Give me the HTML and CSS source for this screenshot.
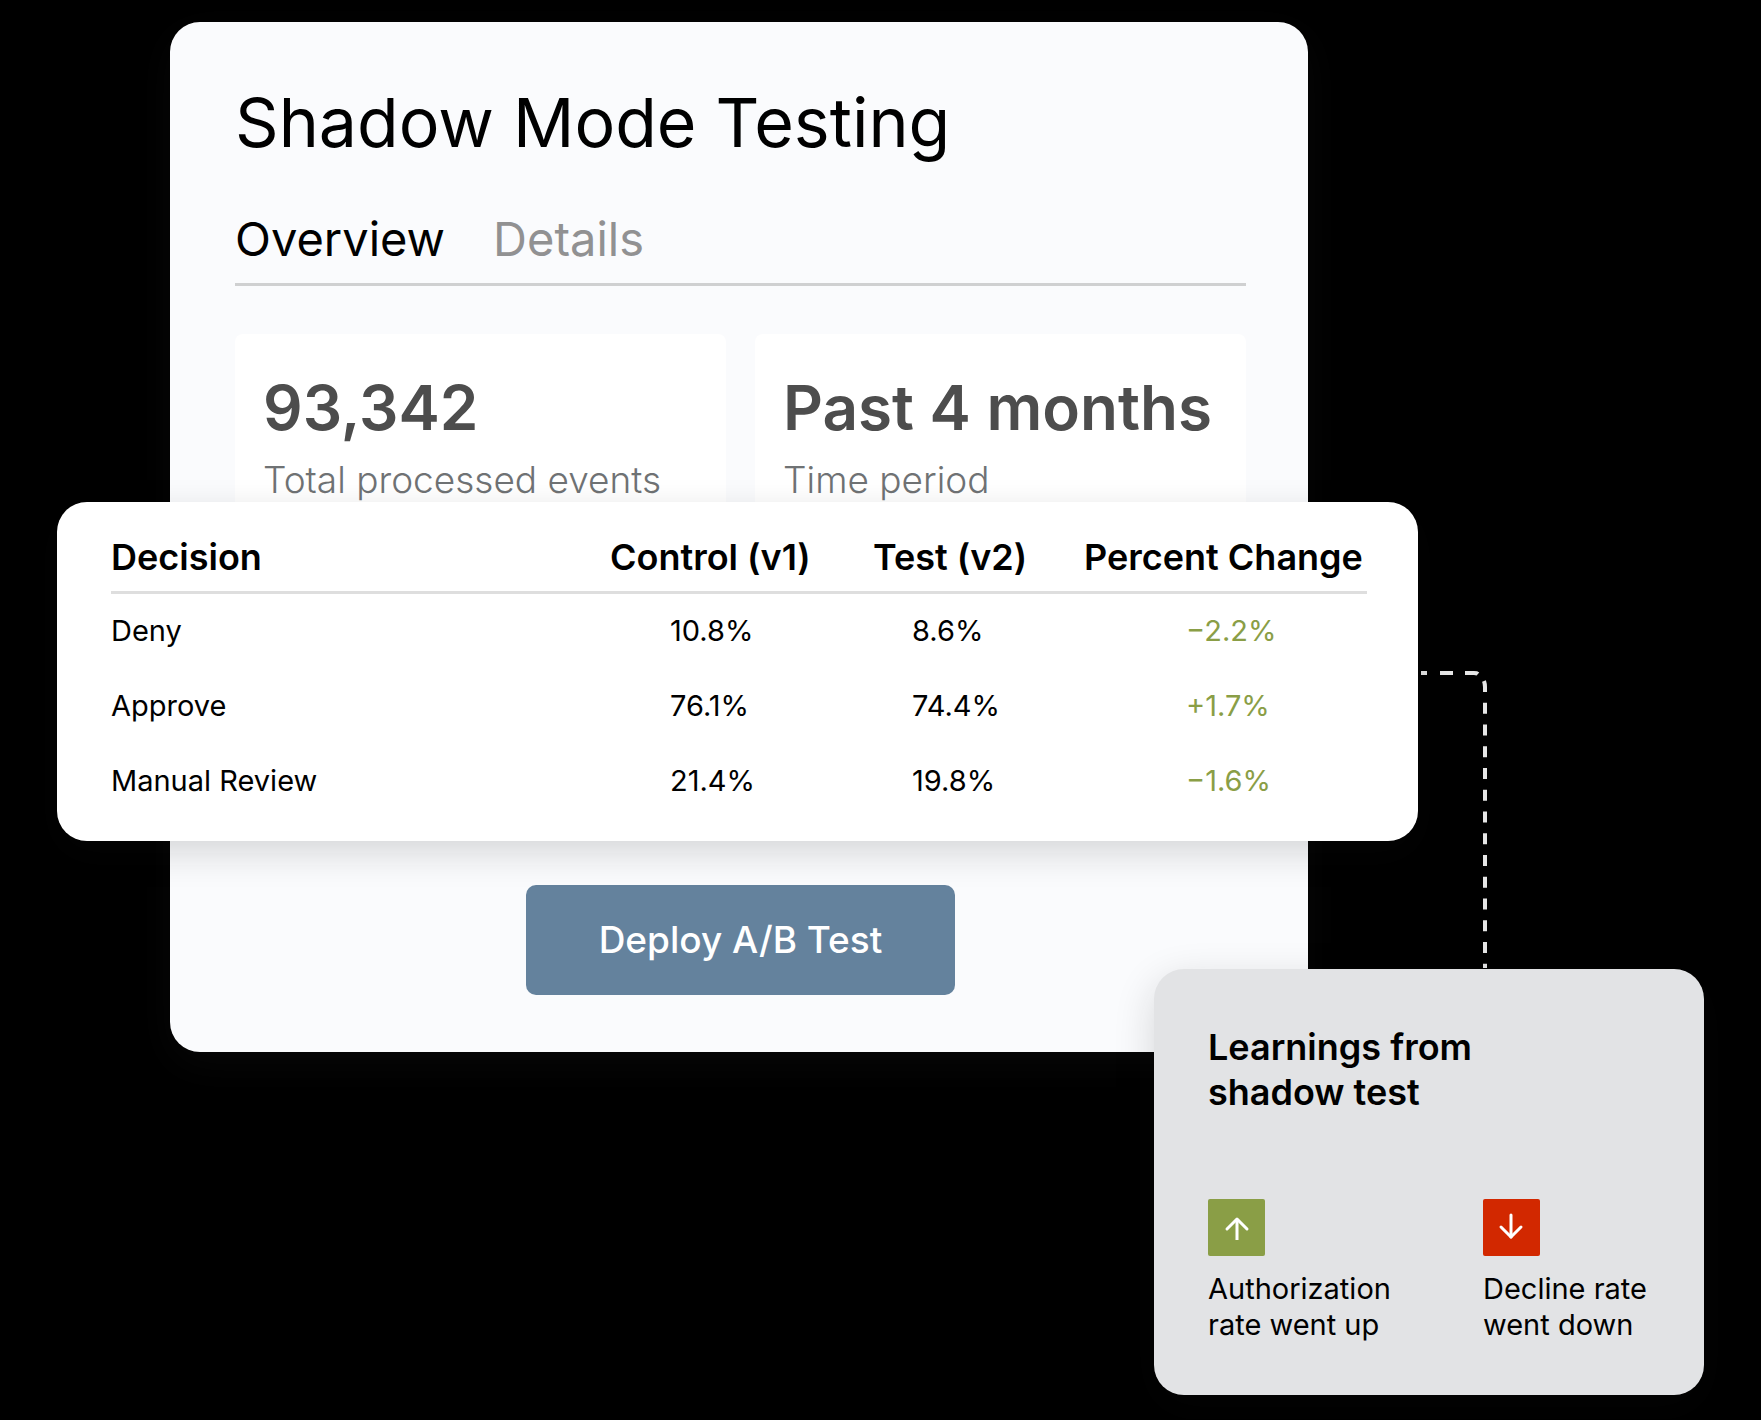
FILE: index.html
```html
<!DOCTYPE html>
<html lang="en">

<head>
    <meta charset="UTF-8">
    <meta name="viewport" content="width=device-width, initial-scale=1.0">
    <title>Shadow Mode Testing</title>
    <link rel="stylesheet" href="styles.css">
</head>

<body>
    <main class="scene">
        <!-- Main Panel -->
        <section class="panel">
            <h1 class="panel-title">Shadow Mode Testing</h1>
            <nav class="tabs">
                <a href="#overview" class="tab active">Overview</a>
                <a href="#details" class="tab">Details</a>
            </nav>
            <div class="stats">
                <div class="stat">
                    <div class="stat-value">93,342</div>
                    <div class="stat-label">Total processed events</div>
                </div>
                <div class="stat">
                    <div class="stat-value">Past 4 months</div>
                    <div class="stat-label">Time period</div>
                </div>
            </div>
            <button type="button" class="deploy-btn">Deploy A/B Test</button>
        </section>

        <!-- Decision Table -->
        <section class="decisions">
            <table>
                <thead>
                    <tr>
                        <th>Decision</th>
                        <th class="col-control">Control (v1)</th>
                        <th class="col-test">Test (v2)</th>
                        <th class="col-change">Percent Change</th>
                    </tr>
                </thead>
                <tbody>
                    <tr>
                        <td>Deny</td>
                        <td class="control">10.8%</td>
                        <td class="test">8.6%</td>
                        <td class="change">−2.2%</td>
                    </tr>
                    <tr>
                        <td>Approve</td>
                        <td class="control">76.1%</td>
                        <td class="test">74.4%</td>
                        <td class="change">+1.7%</td>
                    </tr>
                    <tr>
                        <td>Manual Review</td>
                        <td class="control">21.4%</td>
                        <td class="test">19.8%</td>
                        <td class="change">−1.6%</td>
                    </tr>
                </tbody>
            </table>
        </section>

        <!-- Dashed connector between the table and the learnings -->
        <svg class="connector" width="72" height="298" viewBox="0 0 72 298" fill="none" stroke="#e6e6e6" stroke-width="4" aria-hidden="true">
            <path d="M3 2H56Q59 2 60 3" stroke-dasharray="6 13 13 12 13 20" />
            <path d="M66 10Q67 13 67 16V297" stroke-dasharray="11 10.75" />
        </svg>

        <!-- Learnings Card -->
        <section class="learnings">
            <h2 class="learnings-title">Learnings from<br>shadow test</h2>
            <div class="learnings-list">
                <div class="learning">
                    <svg class="badge up" viewBox="0 0 57 57" aria-hidden="true">
                        <path d="M19 30L29 20L39 30" />
                        <path d="M29 20V41" stroke-linecap="butt" />
                    </svg>
                    <p>Authorization<br>rate went up</p>
                </div>
                <div class="learning">
                    <svg class="badge down" viewBox="0 0 57 57" aria-hidden="true">
                        <path d="M18 28L28 38L38 28" />
                        <path d="M28 38V16" />
                    </svg>
                    <p>Decline rate<br>went down</p>
                </div>
            </div>
        </section>
    </main>
</body>

</html>
```
FILE: styles.css
```css
/* Global Styles */
* {
    box-sizing: border-box;
}

body {
    margin: 0;
    font-family: Inter, "Liberation Sans", sans-serif;
    background-color: #000;
    color: #000;
}

/* Scene: the three cards share one grid and overlap by area */
.scene {
    display: grid;
    grid-template-columns: 57fr 113fr 984fr 154fr 110fr 286fr 57fr;
    grid-template-rows: 480px auto 128px 83px auto;
    padding: 22px 0 24px;
}

/* Main Panel */
.panel {
    grid-area: 1 / 3 / 5 / 5;
    display: flex;
    flex-direction: column;
    padding: 58px 62px 57px 65px;
    background-color: #fafbfd;
    border-radius: 30px;
    box-shadow: 0 12px 40px rgba(128, 128, 128, 0.06);
}

.panel-title {
    margin: 0 0 43px;
    font-size: 68px;
    font-weight: 400;
    line-height: 84px;
}

.tabs {
    display: flex;
    gap: 48px;
    padding-bottom: 12px;
    border-bottom: 3px solid #cfd0d1;
    font-size: 47px;
    line-height: 64px;
}

.tab {
    color: #919192;
    text-decoration: none;
}

.tab.active {
    color: #000;
}

.stats {
    display: grid;
    grid-template-columns: 1fr 1fr;
    gap: 29px;
    margin-top: 48px;
}

.stat {
    padding: 36px 0 40px 28px;
    background-color: #fff;
    border-radius: 8px;
    white-space: nowrap;
}

.stat-value {
    color: #4d4d4d;
    font-size: 62px;
    font-weight: 600;
    line-height: 75px;
}

.stat-label {
    margin-top: 12px;
    color: #6f7274;
    font-size: 37px;
    font-weight: 300;
    line-height: 45px;
}

.deploy-btn {
    align-self: center;
    margin-top: auto;
    padding: 32px 73px;
    border: none;
    border-radius: 10px;
    background-color: #64829d;
    color: #fff;
    font-family: inherit;
    font-size: 37px;
    font-weight: 500;
    line-height: 46px;
    cursor: pointer;
}

/* Decision Table */
.decisions {
    grid-area: 2 / 2 / 3 / 6;
    padding: 33px 51px 23px 54px;
    background-color: #fff;
    border-radius: 30px;
    box-shadow: 0 12px 36px rgba(26, 26, 26, 0.16);
    z-index: 1;
}

.decisions table {
    width: 100%;
    table-layout: fixed;
    border-collapse: collapse;
}

.decisions th {
    padding: 0 0 11px;
    border-bottom: 3px solid #dedede;
    font-size: 36px;
    font-weight: 600;
    line-height: 45px;
    text-align: left;
    white-space: nowrap;
}

.col-control {
    width: 263px;
}

.col-test {
    width: 211px;
}

.col-change {
    width: 283px;
}

.decisions td {
    padding: 0 0 39px;
    font-size: 29px;
    line-height: 36px;
}

.decisions tbody tr:first-child td {
    padding-top: 19px;
}

.decisions tbody tr:last-child td {
    padding-bottom: 19px;
}

.decisions .control {
    padding-left: 60px;
}

.decisions .test {
    padding-left: 39px;
}

.decisions .change {
    padding-left: 102px;
    color: #8a9e46;
}

/* Connector */
.connector {
    grid-area: 2 / 6 / 4 / 7;
    align-self: end;
}

/* Learnings Card */
.learnings {
    grid-area: 4 / 4 / 6 / 7;
    display: flex;
    flex-direction: column;
    gap: 84px;
    padding: 56px 54px 52px;
    background-color: #e2e3e5;
    border-radius: 30px;
    box-shadow: 0 12px 40px rgba(26, 26, 26, 0.16);
    z-index: 2;
}

.learnings-title {
    margin: 0;
    font-size: 36px;
    font-weight: 600;
    line-height: 45px;
}

.learnings-list {
    display: grid;
    grid-template-columns: 275fr 167fr;
    white-space: nowrap;
}

.badge {
    display: block;
    width: 57px;
    height: 57px;
    border-radius: 2px;
    fill: none;
    stroke: #fff;
    stroke-width: 3px;
    stroke-linecap: round;
    stroke-linejoin: round;
}

.badge.up {
    background-color: #8a9e46;
}

.badge.down {
    background-color: #d22800;
}

.learning p {
    margin: 15px 0 0;
    font-size: 29px;
    line-height: 36px;
}
```
